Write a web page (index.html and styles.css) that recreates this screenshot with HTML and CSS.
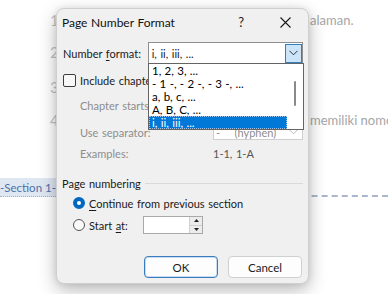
FILE: index.html
```html
<!DOCTYPE html>
<html>
<head>
<meta charset="utf-8">
<link rel="stylesheet" href="styles.css">
</head>
<body>
<div class="doc">
  <div class="line l1"><span class="num">1</span><span class="tail">alaman.</span></div>
  <div class="line l2"><span class="num">2</span><span class="tail"></span></div>
  <div class="line l3"><span class="num">3</span><span class="tail"></span></div>
  <div class="line l4"><span class="num">4</span><span class="tail">memiliki nomo</span></div>
  <div class="section"><span class="sec-label">-Section 1-</span><span class="sec-line"></span></div>
</div>

<div class="dialog">
  <div class="titlebar">
    <span class="title">Page Number Format</span>
    <span class="help">?</span>
    <svg class="close" width="11" height="11" viewBox="0 0 11 11"><path d="M0.5 0.5 L10.5 10.5 M10.5 0.5 L0.5 10.5" stroke="#1a1a1a" stroke-width="1.1" fill="none"/></svg>
  </div>
  <div class="content">
    <div class="row r-format">
      <span class="lbl">Number <u>f</u>ormat:</span>
      <div class="combo main">
        <span class="combo-text">i, ii, iii, ...</span>
        <span class="combo-btn active"><svg width="9" height="6" viewBox="0 0 9 6"><path d="M0.5 0.8 L4.5 4.8 L8.5 0.8" stroke="#333" stroke-width="1" fill="none"/></svg></span>
      </div>
    </div>
    <div class="row r-check">
      <span class="checkbox"></span>
      <span class="lbl">Include chapte<u>r</u> number</span>
    </div>
    <div class="row r-indent r-chapter">
      <span class="lbl dis">Chapter starts with style:</span>
    </div>
    <div class="row r-indent r-sep">
      <span class="lbl dis">Use separator:</span>
      <div class="combo small dis">
        <span class="combo-text">-&nbsp;&nbsp;&nbsp;&nbsp;(hyphen)</span>
        <span class="combo-btn"><svg width="9" height="6" viewBox="0 0 9 6"><path d="M0.5 0.8 L4.5 4.8 L8.5 0.8" stroke="#b8b8b8" stroke-width="1" fill="none"/></svg></span>
      </div>
    </div>
    <div class="row r-indent r-ex">
      <span class="lbl dis">Examples:</span>
      <span class="examples">1-1, 1-A</span>
    </div>
    <div class="row r-group">
      <span class="lbl">Page numbering</span>
      <span class="group-line"></span>
    </div>
    <div class="row r-radio r-cont">
      <span class="radio checked"></span>
      <span class="lbl"><u>C</u>ontinue from previous section</span>
    </div>
    <div class="row r-radio r-start">
      <span class="radio"></span>
      <span class="lbl start-lbl">Start <u>a</u>t:</span>
      <div class="spin">
        <span class="spin-field"></span>
        <span class="spin-btns">
          <span class="spin-b"><svg width="5" height="3" viewBox="0 0 5 3"><path d="M0 3 L2.5 0 L5 3Z" fill="#222"/></svg></span>
          <span class="spin-b"><svg width="5" height="3" viewBox="0 0 5 3"><path d="M0 0 L2.5 3 L5 0Z" fill="#222"/></svg></span>
        </span>
      </div>
    </div>
    <div class="row r-buttons">
      <button class="btn default">OK</button>
      <button class="btn">Cancel</button>
    </div>
  </div>

  <div class="listbox">
    <ul class="items">
      <li>1, 2, 3, ...</li>
      <li>- 1 -, - 2 -, - 3 -, ...</li>
      <li>a, b, c, ...</li>
      <li>A, B, C, ...</li>
      <li class="sel">i, ii, iii, ...</li>
    </ul>
    <div class="scroll"><span class="thumb"></span></div>
  </div>
</div>
</body>
</html>
```

FILE: styles.css
```css
html, body {
  margin: 0;
  padding: 0;
}
body {
  width: 388px;
  height: 294px;
  overflow: hidden;
  background: #ffffff;
  font-family: Lato, "Noto Sans", sans-serif;
  position: relative;
}

/* background document */
.doc {
  padding-top: 10px;
}
.line {
  display: grid;
  grid-template-columns: 50px 260px auto;
  height: 20px;
  align-items: center;
}
.line .num {
  grid-column: 2;
  font-size: 15px;
  color: #c4c4c4;
}
.line .tail {
  grid-column: 3;
  font-size: 13px;
  color: #a6a6a6;
  white-space: nowrap;
}
.l2 { margin-top: 12px; }
.l3 { margin-top: 15px; }
.l4 { margin-top: 13px; }
.section {
  margin-top: 48px;
  display: flex;
  height: 19px;
  align-items: stretch;
}
.sec-label {
  background: #dfe7f3;
  color: #4d72a8;
  font-size: 11.5px;
  line-height: 19px;
  padding: 0 4px 0 0;
  border-bottom: 1px dotted #9fb2cf;
  white-space: nowrap;
}
.sec-line {
  flex: 1;
  border-bottom: 2px dashed #a9b6cc;
}

/* dialog */
.dialog {
  position: absolute;
  left: 56px;
  top: 8px;
  width: 251px;
  height: 274px;
  background: #f0f0f0;
  border: 1px solid #cfcfcf;
  border-radius: 8px;
  box-shadow: 0 6px 18px rgba(0, 0, 0, 0.28), 0 0 6px rgba(0, 0, 0, 0.08);
  font-size: 11px;
  word-spacing: 0.8px;
  color: #1a1a1a;
}
.titlebar {
  height: 26px;
  display: flex;
  align-items: center;
  padding-left: 5px;
}
.title {
  flex: 1;
  font-size: 12px;
  word-spacing: 0.5px;
  color: #111;
}
.help {
  font-size: 13px;
  margin-right: 36px;
}
.close {
  margin-right: 17px;
}
.content {
  padding: 0 5px 0 5px;
}
.row {
  display: flex;
  align-items: center;
  height: 22px;
}
.lbl {
  white-space: nowrap;
}
.lbl u {
  text-decoration-thickness: 1px;
  text-underline-offset: 2px;
}
.dis {
  color: #8d8d8d;
}
.r-format {
  margin-top: 7px;
}
.r-format .lbl {
  width: 85px;
  padding-left: 1px;
}
.combo {
  display: flex;
  align-items: center;
  background: #fff;
  border: 1px solid #8f8f8f;
  box-sizing: border-box;
}
.combo.main {
  width: 156px;
  height: 22px;
}
.combo-text {
  flex: 1;
  padding-left: 3px;
  white-space: nowrap;
}
.combo-btn {
  width: 15px;
  height: 14px;
  display: flex;
  align-items: center;
  justify-content: center;
  margin-right: 1px;
  box-sizing: border-box;
}
.combo-btn.active {
  background: #cce4f7;
  border: 1px solid #2f7fc3;
  height: 19px;
  width: 17px;
  margin-right: 0;
}
.r-check {
  margin-top: 5px;
}
.checkbox {
  width: 11px;
  height: 11px;
  border: 1px solid #3c3c3c;
  border-radius: 2px;
  background: #f7f7f7;
  margin-left: 1px;
  margin-right: 4px;
}
.r-indent {
  padding-left: 18px;
}
.r-indent .lbl {
  width: 133px;
}
.combo.small {
  width: 90px;
  height: 16px;
  border-color: #cfcfcf;
}
.combo.dis .combo-text {
  color: #8d8d8d;
  padding-left: 2px;
}
.r-chapter {
  margin-top: 3px;
}
.r-sep {
  margin-top: 5px;
}
.r-ex {
  margin-top: 0;
  height: 20px;
}
.examples {
  color: #555;
}
.r-group {
  margin-top: 11px;
  height: 18px;
}
.group-line {
  flex: 1;
  height: 1px;
  background: #dadada;
  margin-left: 4px;
}
.r-radio {
  padding-left: 11px;
  height: 18px;
}
.r-cont {
  margin-top: 2px;
}
.r-start {
  margin-top: 3px;
  height: 20px;
}
.start-lbl {
  width: 54px;
}
.radio {
  width: 12px;
  height: 12px;
  border-radius: 50%;
  border: 1px solid #555;
  background: #f9f9f9;
  box-sizing: border-box;
  margin-right: 4px;
}
.radio.checked {
  border: 4px solid #0067c0;
  background: #ffffff;
}
.spin {
  display: flex;
  height: 18px;
  width: 60px;
  border: 1px solid #a9a9a9;
  box-sizing: border-box;
  background: #fff;
}
.spin-field {
  flex: 1;
}
.spin-btns {
  width: 12px;
  display: flex;
  flex-direction: column;
  border-left: 1px solid #d0d0d0;
}
.spin-b {
  flex: 1;
  display: flex;
  align-items: center;
  justify-content: center;
  background: #ececec;
  border-bottom: 1px solid #d0d0d0;
}
.spin-b:last-child {
  border-bottom: none;
}
.r-buttons {
  margin-top: 21px;
  justify-content: flex-end;
  gap: 10px;
  padding-right: 1px;
}
.btn {
  width: 74px;
  height: 22px;
  font-family: inherit;
  font-size: 11.5px;
  color: #1a1a1a;
  background: #fdfdfd;
  border: 1px solid #d0d0d0;
  border-radius: 4px;
  padding: 0;
}
.btn.default {
  border: 1px solid #3a7cbf;
  box-shadow: inset 0 0 0 1px #c9dcef;
}

/* dropped-down list */
.listbox {
  position: absolute;
  left: 91px;
  top: 54px;
  width: 156px;
  height: 67px;
  background: #fff;
  border: 1px solid #646464;
  box-sizing: border-box;
  display: flex;
  font-size: 11.5px;
  word-spacing: 0.4px;
}
.items {
  list-style: none;
  margin: 0;
  padding: 0;
  flex: 1;
}
.items li {
  height: 13px;
  line-height: 13px;
  padding-left: 3px;
  white-space: nowrap;
  color: #000;
}
.items li.sel {
  background: #0078d7;
  color: #fff;
  outline: 1px dotted #9ec3ea;
  outline-offset: -1px;
}
.scroll {
  width: 16px;
  display: flex;
  justify-content: center;
  padding-top: 17px;
}
.thumb {
  width: 2px;
  height: 25px;
  background: #8a8a8a;
  border-radius: 1px;
}
```
